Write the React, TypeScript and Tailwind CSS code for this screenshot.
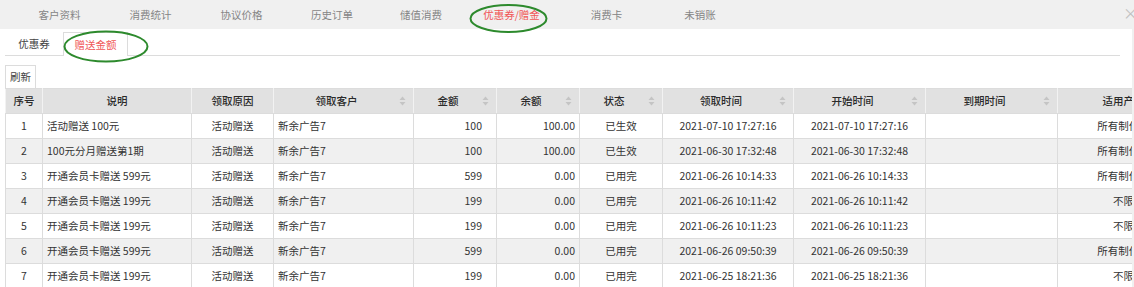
import React from "react";

const topTabs = [
  { label: "客户资料", w: "w-[91px]" },
  { label: "消费统计", w: "w-[91px]" },
  { label: "协议价格", w: "w-[91px]" },
  { label: "历史订单", w: "w-[90px]" },
  { label: "储值消费", w: "w-[88px]" },
  { label: "优惠券/赠金", w: "w-[93px]", active: true },
  { label: "消费卡", w: "w-[97px]" },
  { label: "未销账", w: "w-[90px]" },
];

const cols = [
  { title: "序号", w: 37 },
  { title: "说明", w: 149 },
  { title: "领取原因", w: 82 },
  { title: "领取客户", w: 140, sort: true },
  { title: "金额", w: 83, sort: true },
  { title: "余额", w: 83, sort: true },
  { title: "状态", w: 83, sort: true },
  { title: "领取时间", w: 131, sort: true },
  { title: "开始时间", w: 132, sort: true },
  { title: "到期时间", w: 132, sort: true },
  { title: "适用产品", w: 132 },
];

const rows = [
  ["1", "活动赠送 100元", "100", "100.00", "已生效", "2021-07-10 17:27:16", "所有制作品"],
  ["2", "100元分月赠送第1期", "100", "100.00", "已生效", "2021-06-30 17:32:48", "所有制作品"],
  ["3", "开通会员卡赠送 599元", "599", "0.00", "已用完", "2021-06-26 10:14:33", "所有制作品"],
  ["4", "开通会员卡赠送 199元", "199", "0.00", "已用完", "2021-06-26 10:11:42", "不限"],
  ["5", "开通会员卡赠送 199元", "199", "0.00", "已用完", "2021-06-26 10:11:23", "不限"],
  ["6", "开通会员卡赠送 599元", "599", "0.00", "已用完", "2021-06-26 09:50:39", "所有制作品"],
  ["7", "开通会员卡赠送 199元", "199", "0.00", "已用完", "2021-06-25 18:21:36", "不限"],
];

function SortIcon() {
  return (
    <svg width="7" height="10" viewBox="0 0 7 10" className="absolute right-[7px] top-1/2 -translate-y-1/2">
      <path d="M3.5 0.5 L6.5 4 L0.5 4 Z" fill="#c4c4c4" />
      <path d="M0.5 6 L6.5 6 L3.5 9.5 Z" fill="#c4c4c4" />
    </svg>
  );
}

export default function App() {
  const cell = "border border-[#dcdcdc] h-[25px] px-[4px] whitespace-nowrap overflow-hidden";
  return (
    <div
      className="relative w-[1134px] h-[287px] overflow-hidden bg-[#f0f0f0] text-[10.5px] text-[#333]"
      style={{ fontFamily: '"Noto Sans CJK SC", "Noto Sans", sans-serif' }}
    >
      {/* top tabs */}
      <div className="flex h-[29px] items-center pl-[14px]">
        {topTabs.map((t) => (
          <div
            key={t.label}
            className={`${t.w} shrink-0 text-center text-[10.5px] ${t.active ? "text-[#f05656]" : "text-[#858585]"}`}
          >
            {t.label}
          </div>
        ))}
      </div>
      <div className="absolute right-[-4px] top-[5px] text-[15px] leading-none text-[#c0c0c0]">×</div>

      {/* content panel */}
      <div className="w-[1132px] h-[258px] bg-white overflow-hidden">
        <div className="mx-[5px] mr-[12px] mt-[4px] flex h-[23px] items-end border-b border-[#dcdcdc]">
          <div className="flex h-[23px] w-[58px] items-center justify-center text-[#444]">优惠券</div>
          <div className="-mb-px flex h-[24px] w-[65px] items-center justify-center border border-b-0 border-[#dcdcdc] bg-white text-[#f05656]">
            赠送金额
          </div>
        </div>

        <div className="ml-[5px] mt-[9px] flex h-[23px] w-[31px] items-center justify-center border border-b-0 border-[#dcdcdc] text-[#444]">
          刷新
        </div>

        <div className="ml-[5px]">
          <table className="table-fixed border-collapse" style={{ width: 1184 }}>
            <colgroup>
              {cols.map((c) => (
                <col key={c.title} style={{ width: c.w }} />
              ))}
            </colgroup>
            <thead>
              <tr className="bg-[#e1e1e1]">
                {cols.map((c) => (
                  <th
                    key={c.title}
                    className={`relative border border-[#dcdcdc] border-x-[#f2f2f2] h-[25px] font-medium text-[#2a2a2a] text-center ${c.sort ? "pr-[14px]" : ""}`}
                  >
                    {c.title}
                    {c.sort && <SortIcon />}
                  </th>
                ))}
              </tr>
            </thead>
            <tbody>
              {rows.map((r, i) => (
                <tr key={i} className={i % 2 === 1 ? "bg-[#f0f0f0]" : "bg-white"}>
                  <td className={`${cell} text-center`}>{r[0]}</td>
                  <td className={`${cell} text-left`}>{r[1]}</td>
                  <td className={`${cell} text-center`}>活动赠送</td>
                  <td className={`${cell} text-left`}>新余广告7</td>
                  <td className={`${cell} text-right pr-[14px]`}>{r[2]}</td>
                  <td className={`${cell} text-right`}>{r[3]}</td>
                  <td className={`${cell} text-center`}>{r[4]}</td>
                  <td className={`${cell} text-center`}>{r[5]}</td>
                  <td className={`${cell} text-center`}>{r[5]}</td>
                  <td className={cell}></td>
                  <td className={`${cell} text-center`}>{r[6]}</td>
                </tr>
              ))}
            </tbody>
          </table>
        </div>
      </div>

      {/* annotation ellipses */}
      <svg className="pointer-events-none absolute left-0 top-0" width="1134" height="287">
        <ellipse cx="106" cy="46.5" rx="41.5" ry="15" fill="none" stroke="#2d8a2d" strokeWidth="2" />
        <ellipse cx="508.5" cy="18.5" rx="38" ry="13.5" fill="none" stroke="#2d8a2d" strokeWidth="2" />
      </svg>
    </div>
  );
}
